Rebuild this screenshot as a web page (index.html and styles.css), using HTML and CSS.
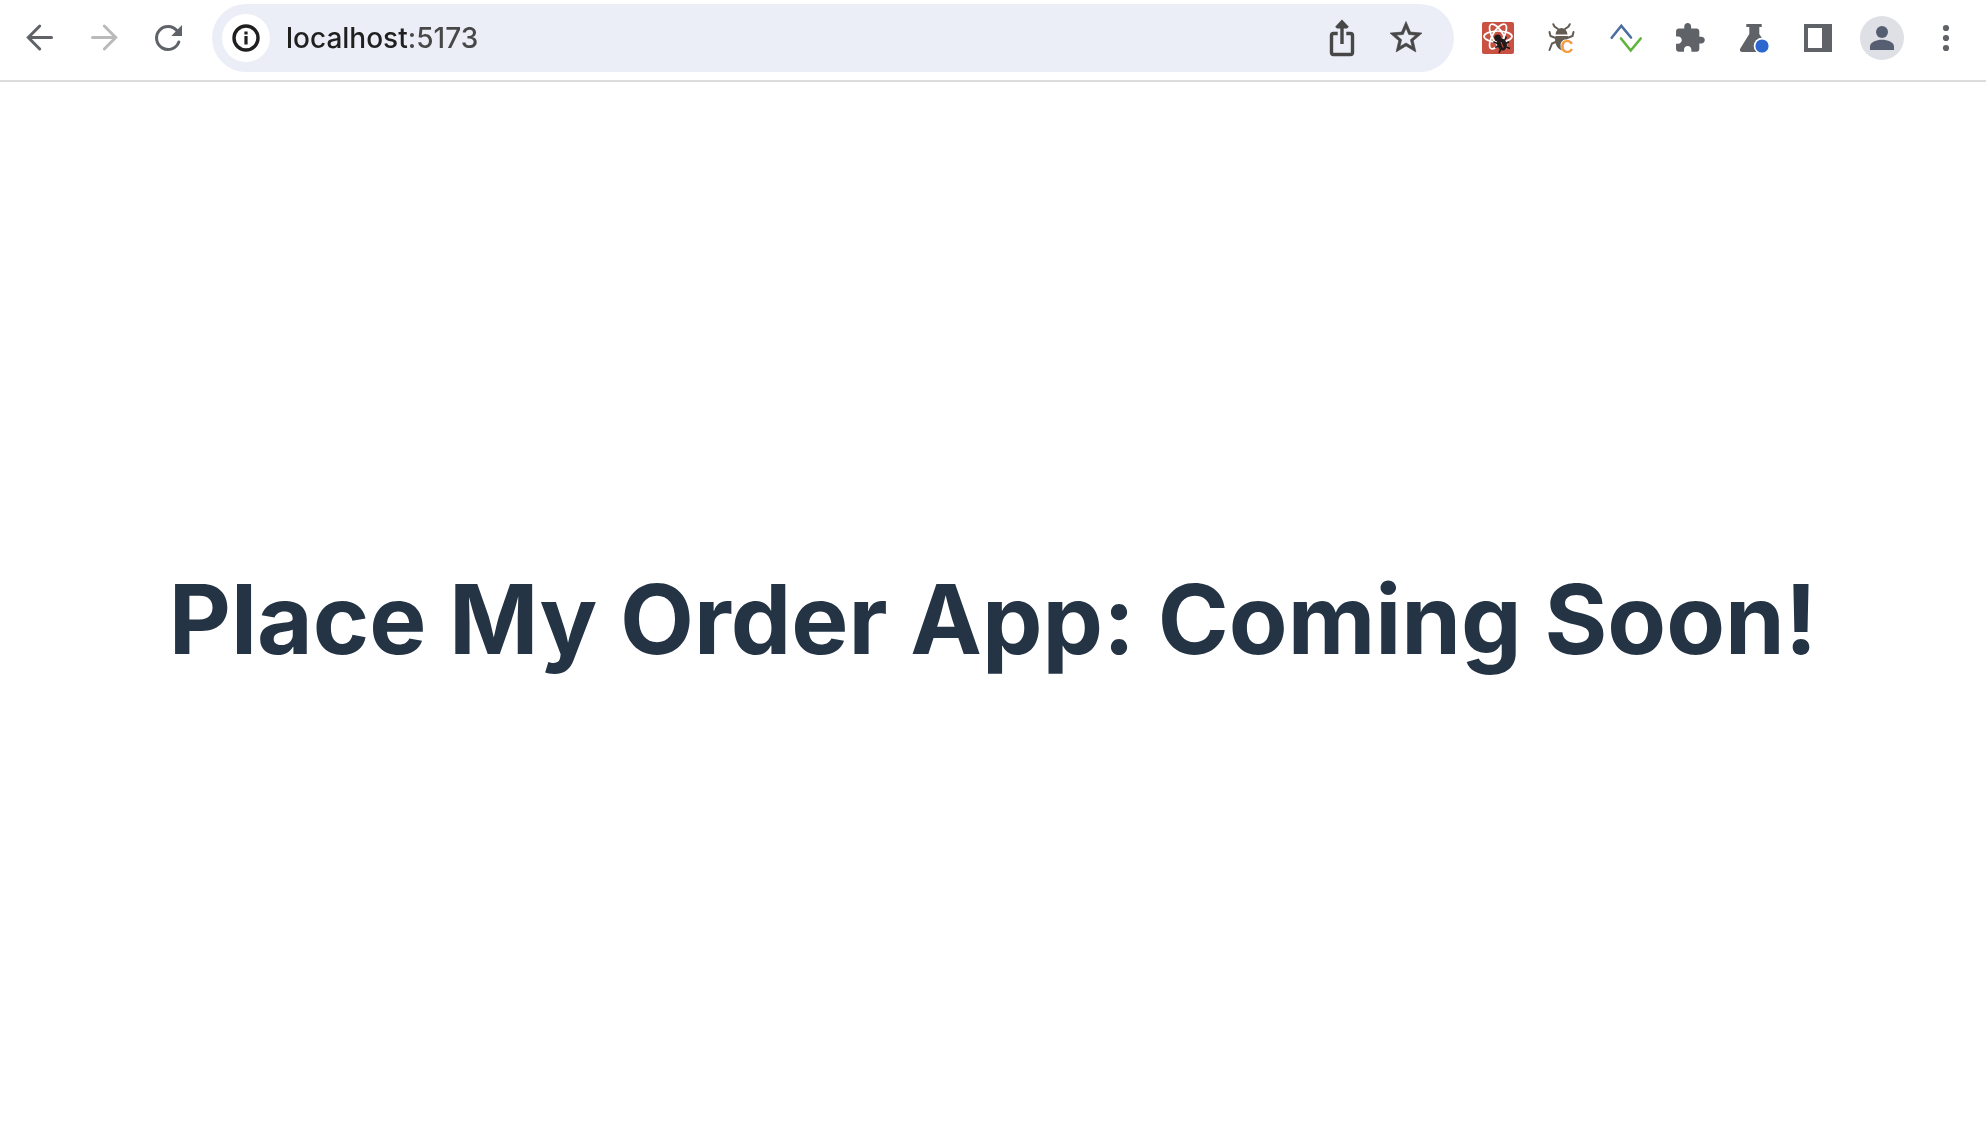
FILE: index.html
```html
<!DOCTYPE html>
<html lang="en">
<head>
<meta charset="utf-8">
<title>Place My Order</title>
<link rel="stylesheet" href="styles.css">
</head>
<body>
<header class="toolbar">
  <nav class="group" aria-label="Navigation">
    <button class="tool" type="button" aria-label="Back"><svg class="icon line" viewBox="0 0 48 48"><path d="M35.5 23.5H12.5M23.7 12L12.3 23.5L23.7 35"/></svg></button>
    <button class="tool tool-off" type="button" aria-label="Forward" disabled><svg class="icon line" viewBox="0 0 48 48"><path d="M12.5 23.5H35.5M24.3 12L35.7 23.5L24.3 35"/></svg></button>
    <button class="tool" type="button" aria-label="Reload"><svg class="icon line" viewBox="0 0 48 48"><path d="M34.8 28A11.5 11.5 0 1 1 33 16.8"/><path class="fill" d="M38 11V22H27.300Z"/></svg></button>
  </nav>
  <form class="address">
    <button class="site-info" type="button" aria-label="View site information"><svg class="icon" viewBox="0 0 48 48"><circle class="ring" cx="24" cy="24" r="12"/><path d="M22.400 17.400h3.200v3h-3.200zM22.400 22h3.200v8.500h-3.200z"/></svg></button>
    <input class="url" type="text" value="localhost:5173" aria-label="Address" spellcheck="false">
    <button class="tool tool-dark" type="button" aria-label="Share"><svg class="icon" viewBox="0 0 48 48"><path class="stroke" d="M19.700 19.500H15.500a2 2 0 0 0-2 2V38.500a2 2 0 0 0 2 2H32.500a2 2 0 0 0 2-2V21.500a2 2 0 0 0-2-2H28.300M24 30V11"/><path d="M24 5.500L30.800 12.800L29 14.500H19L17.200 12.800Z"/></svg></button>
    <button class="tool tool-dark" type="button" aria-label="Bookmark this page"><svg class="icon" viewBox="0 0 48 48"><path stroke="currentColor" stroke-width=".4" transform="translate(4.800 4.300) scale(1.600)" d="M22 9.240l-7.190-.62L12 2 9.190 8.630 2 9.240l5.460 4.730L5.820 21 12 17.270 18.180 21l-1.630-7.030L22 9.240zM12 15.400l-3.760 2.270 1-4.280-3.320-2.880 4.380-.38L12 6.100l1.710 4.040 4.380.38-3.320 2.880 1 4.280L12 15.400z"/></svg></button>
  </form>
  <div class="group">
    <button class="tool" type="button" aria-label="React developer tools"><svg class="icon" viewBox="0 0 48 48"><rect x="8" y="8" width="32" height="32" rx="2" fill="#c95142"/><g fill="none" stroke="#fff" stroke-width="1.700"><ellipse cx="24" cy="22.500" rx="14" ry="5.500"/><ellipse cx="24" cy="22.500" rx="14" ry="5.500" transform="rotate(60 24 22.500)"/><ellipse cx="24" cy="22.500" rx="14" ry="5.500" transform="rotate(120 24 22.500)"/></g><g transform="rotate(-22 27 28)" fill="#211a1a" stroke="#211a1a" stroke-width="1.600"><circle cx="25.500" cy="23" r="2.600"/><ellipse cx="27" cy="30.500" rx="4" ry="5.500"/><path fill="none" d="M20 25l3 3M34 25l-3 3M19.500 31h15M21 37.500l3-3M33 37.500l-3-3"/><path stroke="#c95142" stroke-width="1" d="M27 28v6"/></g></svg></button>
    <button class="tool" type="button" aria-label="Bug extension"><svg class="icon" viewBox="0 0 48 48"><g fill="none" stroke="#625c55" stroke-width="2" stroke-linecap="round"><path d="M15.300 10.200L16.500 12.500L20 15M31.800 10.200L30.500 12.500L27 15M11.500 18L12.500 22L19 24.500M35.500 18L34.500 22L28 24.500M20 27L14 29.500L11.500 36"/></g><path fill="#625c55" d="M17.500 20.500Q18.500 14 23.500 14T29.500 20.500ZM17.500 22H30V25Q24 25 22.500 30Q22 34 24 36.500Q17.500 34 17 26Z"/><text class="badge-letter" x="22.500" y="38.500">C</text></svg></button>
    <button class="tool" type="button" aria-label="Arrows extension"><svg class="icon arrows" viewBox="0 0 48 48"><path stroke="#4b6f9f" d="M9.700 23.700L19.300 11.800L29 23.500"/><path stroke="#5fb53c" d="M19 24.500L28.700 36.500L38.700 24.500"/></svg></button>
    <button class="tool" type="button" aria-label="Extensions"><svg class="icon" viewBox="0 0 48 48"><path transform="translate(7.300 7.600) scale(1.370)" d="M20.500 11H19V7c0-1.100-.9-2-2-2h-4V3.500C13 2.120 11.880 1 10.500 1S8 2.120 8 3.500V5H4c-1.100 0-1.990.9-1.990 2v3.800H3.500c1.490 0 2.700 1.210 2.700 2.700s-1.210 2.700-2.700 2.700H2V20c0 1.100.9 2 2 2h3.800v-1.500c0-1.490 1.210-2.700 2.700-2.700 1.490 0 2.700 1.210 2.700 2.700V22H17c1.100 0 2-.9 2-2v-4h1.500c1.380 0 2.500-1.120 2.500-2.500S21.880 11 20.500 11z"/></svg></button>
    <button class="tool" type="button" aria-label="Experiments"><svg class="icon" viewBox="0 0 48 48"><path d="M16.300 10H31.700V13H29.300V20L37 32V38H12Q9 37.500 10.300 34.500L19.300 20V13H16.300Z"/><circle cx="32" cy="32" r="8.300" fill="#fff"/><circle cx="32" cy="32" r="6.600" fill="#2c67cf"/></svg></button>
    <button class="tool" type="button" aria-label="Side panel"><svg class="icon" viewBox="0 0 48 48"><path fill-rule="evenodd" d="M10 10H38V38H10ZM14 14V34H28V14Z"/></svg></button>
    <button class="tool" type="button" aria-label="Profile"><svg class="icon" viewBox="0 0 48 48"><circle cx="24" cy="24" r="22" fill="#dfe0e6"/><g fill="#565e71"><circle cx="24" cy="18" r="6"/><path d="M12 36V32.500C12 28 18.500 25.700 24 25.700S36 28 36 32.500V36Z"/></g></svg></button>
    <button class="tool" type="button" aria-label="Menu"><svg class="icon" viewBox="0 0 48 48"><circle cx="24" cy="14" r="3.100"/><circle cx="24" cy="24" r="3.100"/><circle cx="24" cy="34" r="3.100"/></svg></button>
  </div>
</header>
<main class="page">
  <h1 class="title">Place My Order App: Coming Soon!</h1>
</main>
</body>
</html>
```
FILE: styles.css
```css
* {
  box-sizing: border-box;
}

body {
  display: flex;
  flex-direction: column;
  min-height: 100vh;
  margin: 0;
  background: #fff;
  font-family: Inter, "Liberation Sans", sans-serif;
}

button {
  padding: 0;
  border: 0;
  background: none;
}

.toolbar {
  display: flex;
  gap: 12px;
  padding: 4px 8px 8px;
  border-bottom: 2px solid #dcdcdc;
}

.group {
  display: flex;
  align-items: center;
}

.tool {
  display: flex;
  align-items: center;
  justify-content: center;
  width: 64px;
  height: 64px;
  color: #5f6368;
}

.tool-off {
  color: #bababa;
}

.tool-dark {
  color: #474747;
}

.icon {
  display: block;
  width: 48px;
  height: 48px;
  fill: currentColor;
}

.line {
  fill: none;
  stroke: currentColor;
  stroke-width: 3;
  stroke-linecap: round;
}

.arrows {
  fill: none;
  stroke-width: 2.6;
  stroke-linecap: round;
}

.fill {
  fill: currentColor;
  stroke: none;
}

.stroke,
.ring {
  fill: none;
  stroke: currentColor;
  stroke-width: 3.4;
}

.badge-letter {
  fill: #f59b3a;
  font-size: 18px;
  font-weight: 700;
}

.address {
  display: flex;
  flex: 1;
  align-items: center;
  min-width: 0;
  height: 68px;
  padding: 0 16px 0 10px;
  border-radius: 34px;
  background: #ebeef7;
}

.site-info {
  width: 48px;
  height: 48px;
  border-radius: 50%;
  background: #fff;
  color: #1f1f1f;
}

.url {
  flex: 1;
  min-width: 0;
  margin-left: 16px;
  padding: 0;
  border: 0;
  outline: 0;
  /* host in near-black, port in grey */
  background: linear-gradient(to right, #1f1f1f 121px, #474747 121px);
  background-clip: text;
  color: transparent;
  font: 500 28px/36px Inter, "Liberation Sans", sans-serif;
}

.page {
  display: flex;
  flex: 1;
  align-items: center;
  justify-content: center;
  padding: 32px 16px 16px;
}

.title {
  margin: 0;
  color: #253445;
  font-size: 96px;
  font-weight: 700;
  line-height: 112px;
  text-align: center;
}
```
